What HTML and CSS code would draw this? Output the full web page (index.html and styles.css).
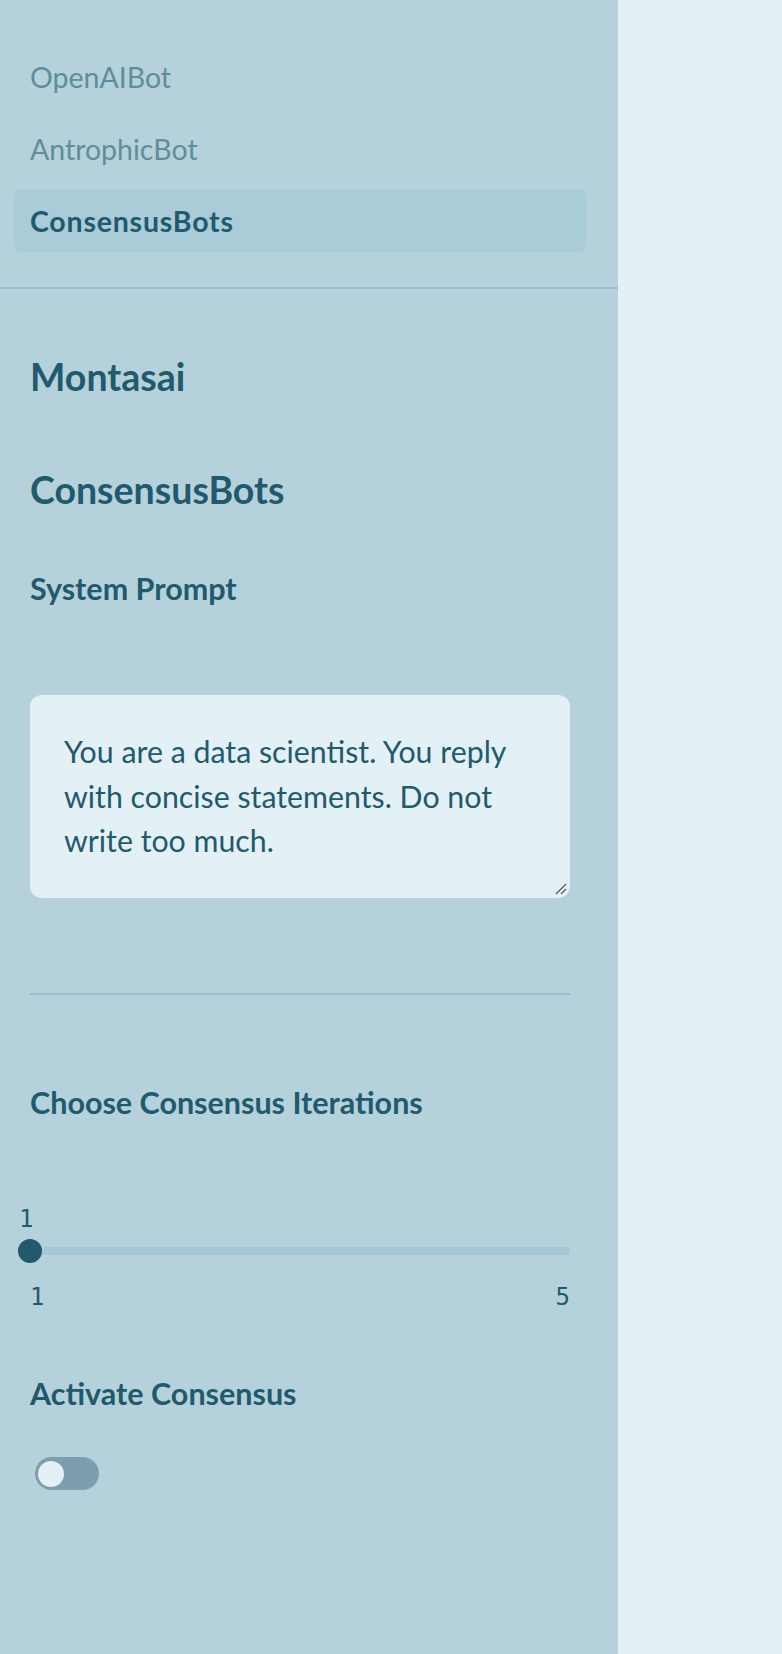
FILE: index.html
```html
<!DOCTYPE html>
<html lang="en">
<head>
<meta charset="utf-8">
<title>Montasai</title>
<link rel="stylesheet" href="styles.css">
</head>
<body>
<div class="app">
  <aside class="sidebar">
    <nav class="nav">
      <a class="nav-item">OpenAIBot</a>
      <a class="nav-item">AntrophicBot</a>
      <a class="nav-item active">ConsensusBots</a>
    </nav>
    <div class="nav-divider"></div>
    <div class="content">
      <h1 class="title">Montasai</h1>
      <h2 class="subtitle">ConsensusBots</h2>
      <h3 class="label label-prompt">System Prompt</h3>
      <div class="textarea">
        <p>You are a data scientist. You reply with concise statements. Do not write too much.</p>
        <svg class="resize" width="12" height="12" viewBox="0 0 12 12"><path d="M1 11 L11 1 M6 11 L11 6" stroke="#555" stroke-width="1.2" fill="none"/></svg>
      </div>
      <hr class="rule">
      <h3 class="label label-iter">Choose Consensus Iterations</h3>
      <div class="slider">
        <div class="slider-value">1</div>
        <div class="track"><div class="thumb"></div></div>
        <div class="ticks"><span>1</span><span>5</span></div>
      </div>
      <h3 class="label label-act">Activate Consensus</h3>
      <div class="toggle"><div class="knob"></div></div>
    </div>
  </aside>
  <main class="main"></main>
</div>
</body>
</html>
```
FILE: styles.css
```css
html, body {
  margin: 0;
  padding: 0;
  background: #e3f0f5;
}
body {
  font-family: Lato, "Open Sans", sans-serif;
  color: #215a6c;
}
.app {
  display: flex;
  min-height: 1654px;
}
.sidebar {
  width: 618px;
  background: #b5d2dc;
  flex-shrink: 0;
}
.main {
  flex: 1;
}
.nav {
  display: flex;
  flex-direction: column;
  gap: 9px;
  padding: 45px 32px 35px 14px;
}
.nav-item {
  display: flex;
  align-items: center;
  height: 63px;
  padding-left: 16px;
  border-radius: 8px;
  font-size: 28.5px;
  color: #5f8d9c;
}
.nav-item.active {
  background: #aacbd8;
  color: #215a6c;
  font-weight: 700;
  letter-spacing: 0.8px;
}
.nav-divider {
  height: 2px;
  background: #9bbdcb;
}
.content {
  padding: 0 48px 0 30px;
}
.title {
  margin: 68px 0 0;
  font-size: 37.5px;
  font-weight: 700;
  line-height: 40px;
}
.subtitle {
  margin: 73px 0 0;
  font-size: 37.5px;
  font-weight: 700;
  line-height: 40px;
}
.label {
  font-size: 30.5px;
  font-weight: 700;
  line-height: 34px;
  margin: 0;
}
.label-prompt { margin-top: 61px; }
.textarea {
  position: relative;
  margin-top: 90px;
  height: 203px;
  box-sizing: border-box;
  background: #e3f0f5;
  border-radius: 12px;
  padding: 34px 34px 0 34px;
}
.textarea p {
  margin: 0;
  font-size: 30.3px;
  line-height: 44.5px;
  color: #215a6c;
}
.resize {
  position: absolute;
  right: 3px;
  bottom: 3px;
}
.rule {
  border: 0;
  height: 2px;
  background: #9bbdcb;
  margin: 95px 0 0;
}
.label-iter { margin-top: 90px; }
.slider {
  margin-top: 87px;
}
.slider-value {
  font-family: "DejaVu Sans Mono", "Liberation Mono", monospace;
  font-size: 24px;
  line-height: 27px;
  margin-left: -11px;
}
.track {
  position: relative;
  height: 8px;
  border-radius: 4px;
  background: #a4c8d5;
  margin-top: 14px;
}
.thumb {
  position: absolute;
  left: -12px;
  top: -8px;
  width: 24px;
  height: 24px;
  border-radius: 50%;
  background: #215a6c;
}
.ticks {
  display: flex;
  justify-content: space-between;
  font-family: "DejaVu Sans Mono", "Liberation Mono", monospace;
  font-size: 24px;
  line-height: 26px;
  margin-top: 29px;
}
.label-act { margin-top: 66px; }
.toggle {
  margin-top: 47px;
  margin-left: 5px;
  width: 64px;
  height: 33px;
  border-radius: 17px;
  background: #7b9fad;
  display: flex;
  align-items: center;
  padding-left: 3px;
  box-sizing: border-box;
}
.knob {
  width: 26px;
  height: 26px;
  border-radius: 50%;
  background: #e3f0f5;
}
```
